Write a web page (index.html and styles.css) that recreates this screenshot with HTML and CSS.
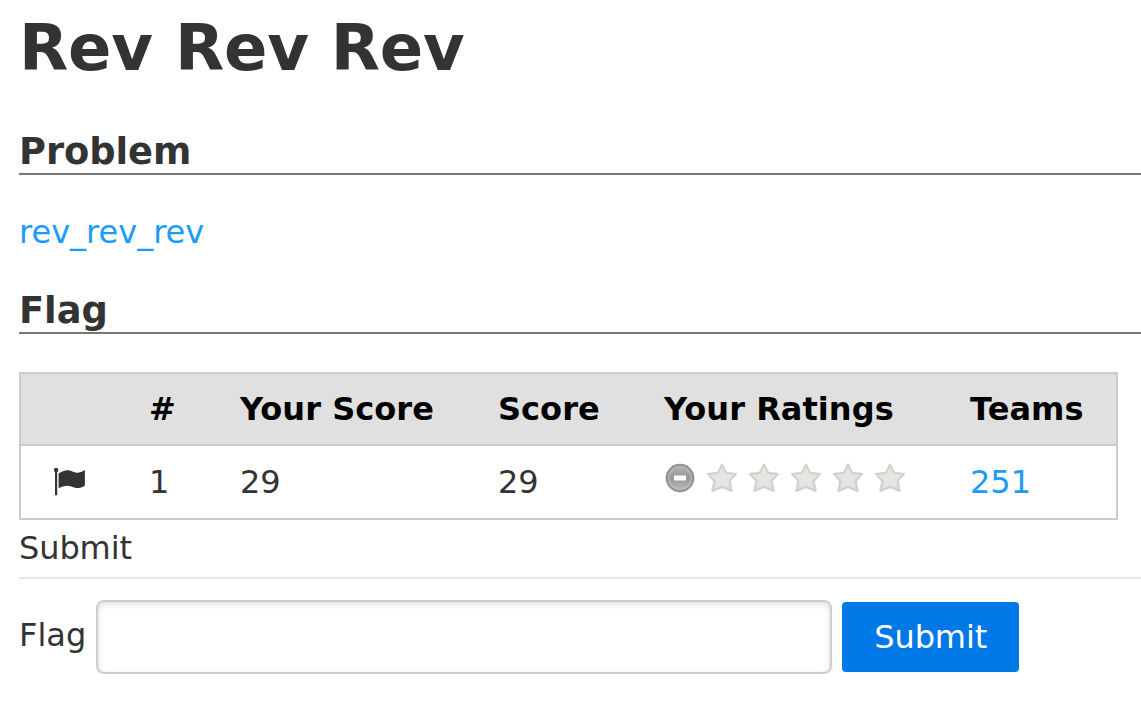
FILE: index.html
```html
<!DOCTYPE html>
<html lang="en">
<head>
<meta charset="utf-8">
<title>Rev Rev Rev</title>
<link rel="stylesheet" href="styles.css">
</head>
<body>
<main class="page">
<h1 class="title">Rev Rev Rev</h1>
<h2 class="heading">Problem</h2>
<p class="problem"><a class="link" href="#">rev_rev_rev</a></p>
<h2 class="heading">Flag</h2>
<table class="scores">
<thead><tr><th></th><th>#</th><th>Your Score</th><th>Score</th><th>Your Ratings</th><th>Teams</th></tr></thead>
<tbody><tr>
<td><svg class="flag" viewBox="0 0 32 28"><circle cx="3.100" cy="2" r="2.200"/><path d="M2 3h2.200v24.200H2zM5.600 5.600C9.500 2.800 14.500 1.200 19 3.200c5 2.300 7.500 2 12.900-1.200v15.500c-5 3.200-8 3.300-13 1.200-4-1.700-8.500-1.200-13.300 1.600z"/></svg></td>
<td>1</td><td>29</td><td>29</td>
<td><div class="ratings">
<svg class="icon" viewBox="0 0 32 32"><defs><linearGradient id="ball" x2="0" y2="1"><stop stop-color="#b2b2b2"/><stop offset=".5" stop-color="#999"/><stop offset="1" stop-color="#bcbcbc"/></linearGradient><linearGradient id="star" x2="0" y2="1"><stop stop-color="#e8e8e6"/><stop offset="1" stop-color="#deded9"/></linearGradient><symbol id="s" viewBox="0 0 32 32"><path d="M16 2.500l4.200 8.200 9.800 1.200-6.300 7.300 2 9.800-9.700-4-9.700 4 2-9.800L2 11.900l9.800-1.200z" fill="url(#star)" stroke="#d0d0ce" stroke-width="2" stroke-linejoin="round"/><path d="M16 6.500l2.800 6 6.600.9-4.600 4.900 1.300 6.700-6.100-3-6.100 3 1.300-6.700-4.600-4.900 6.600-.9z" fill="#e5e5e1"/></symbol></defs><circle cx="16" cy="16" r="13.300" fill="url(#ball)" stroke="#909090" stroke-width="2"/><circle cx="16" cy="16" r="11.300" fill="none" stroke="#b8b8b8" stroke-width="1.200"/><rect x="9" y="12.800" width="14" height="6.400" rx="1" fill="#999"/><rect x="10" y="13.600" width="12" height="4.800" rx=".6" fill="#fff"/></svg>
<svg class="icon"><use href="#s"/></svg><svg class="icon"><use href="#s"/></svg><svg class="icon"><use href="#s"/></svg><svg class="icon"><use href="#s"/></svg><svg class="icon"><use href="#s"/></svg>
</div></td>
<td><a class="link" href="#">251</a></td>
</tr></tbody>
</table>
<form class="form"><div class="legend">Submit</div>
<div class="row"><label class="label" for="flag">Flag</label><input class="input" id="flag" type="text"><button class="button" type="button">Submit</button></div></form>
</main>
</body>
</html>
```
FILE: styles.css
```css
body { margin: 0; background: #fff; color: #333; font: 32px/48px "DejaVu Sans", sans-serif; overflow: hidden; }
.page { padding-left: 19px; }
.title { margin: 0; padding-top: 10px; font-size: 64px; line-height: 76px; letter-spacing: -0.2px; }
.heading { margin: 43px 0 0; height: 44px; border-bottom: 2px solid #777; font-size: 36.8px; line-height: 46px; letter-spacing: -0.05px; }
.problem { margin: 33px 0 0; height: 48px; }
.problem + .heading { margin-top: 32px; }
.link { color: #1c9bff; text-decoration: none; }
.scores { width: 1099px; height: 148px; margin-top: 38px; border: 2px solid #cbcbcb; border-spacing: 0; table-layout: fixed; }
.scores th, .scores td { padding: 0 0 0 32px; text-align: left; }
.scores th { height: 70px; background: #e0e0e0; border-bottom: 2px solid #cbcbcb; color: #000; letter-spacing: 0.05px; }
.scores td { height: 72px; }
.scores th:nth-child(1) { width: 64px; }
.scores th:nth-child(2) { width: 59px; }
.scores th:nth-child(3) { width: 226px; }
.scores th:nth-child(4) { width: 134px; }
.scores th:nth-child(5) { width: 274px; }
.flag { display: block; width: 32px; height: 28px; fill: #333; }
.ratings { display: flex; gap: 10px; padding-bottom: 8px; }
.icon { display: block; width: 32px; height: 32px; filter: blur(0.5px); }
.legend { height: 57px; border-bottom: 2px solid #e5e5e5; line-height: 56px; letter-spacing: -0.1px; }
.row { display: flex; align-items: center; margin-top: 21px; }
.label { padding-bottom: 4px; }
.input { box-sizing: border-box; width: 736px; height: 74px; margin: 0 10px; border: 2px solid #ccc; border-radius: 8px; box-shadow: inset 0 2px 6px #ddd; }
.button { width: 177px; height: 70px; padding: 0; border: 0; border-radius: 4px; background: #0078e7; color: #fff; font: inherit; letter-spacing: -0.1px; }
```
